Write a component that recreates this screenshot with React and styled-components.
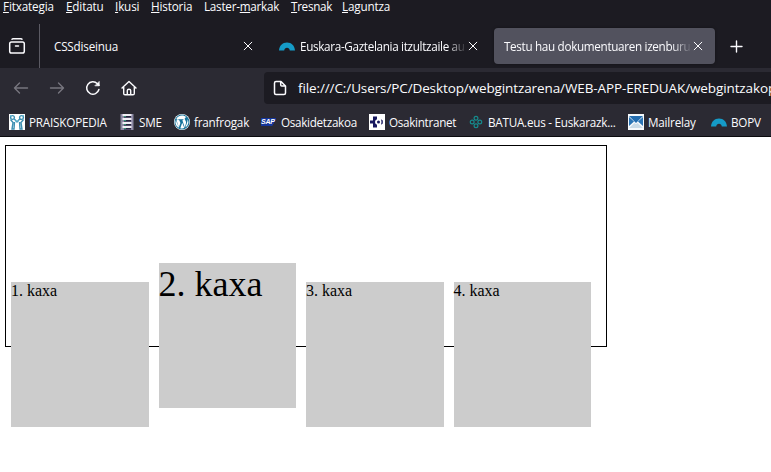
import React from 'react';
import styled, { createGlobalStyle } from 'styled-components';

const GlobalStyle = createGlobalStyle`
  * { box-sizing: border-box; }
  body { margin: 0; background: #fff; overflow: hidden; }
  svg { display: block; flex: none; }
`;

const Browser = styled.div`
  width: 771px;
  height: 472px;
  overflow: hidden;
  display: flex;
  flex-direction: column;
  background: #fff;
  color: #fbfbfe;
  font: 12px/16px "Open Sans", "Noto Sans", sans-serif;
`;

const MenuBar = styled.nav`
  flex: none;
  height: 24px;
  display: flex;
  gap: 12px;
  padding-left: 3px;
  background: #1c1b22;
`;

const Label = styled.span`
  flex: none;
  display: block;
  width: ${(p) => p.$w}px;
  height: 16px;
  font-size: 11.7px;
  letter-spacing: ${(p) => p.$ls || 0}px;
  white-space: nowrap;
`;

const MenuLabel = styled(Label)`
  margin-top: -2px;
  u { text-decoration-thickness: 1px; text-underline-offset: 1px; }
`;

const TabStrip = styled.div`
  flex: none;
  height: 44px;
  display: flex;
  background: #1c1b22;
`;

const RecentButton = styled.div`
  width: 40px;
  border-right: 1px solid #5b5a63;
  padding: 13px 0 0 8px;
`;

const Tab = styled.div`
  display: flex;
  align-items: center;
  width: ${(p) => p.$w}px;
  height: 36px;
  margin: 4px 0 0 ${(p) => p.$gap}px;
  padding-left: 10px;
  border-radius: 4px;
  background: ${(p) => (p.$active ? '#52525e' : 'transparent')};
  box-shadow: ${(p) => (p.$active ? '0 0 3px rgba(0, 0, 0, .35)' : 'none')};
`;

const TabTitle = styled(Label)`
  overflow: hidden;
  margin-left: ${(p) => (p.$icon ? 5 : 0)}px;
  mask-image: ${(p) => (p.$fade ? 'linear-gradient(to left, transparent, #000 20px)' : 'none')};
`;

const TabClose = styled.div`
  margin-left: ${(p) => p.$gap || 0}px;
`;

const NewTab = styled.div`
  margin: 16px 0 0 15px;
`;

const Toolbar = styled.div`
  flex: none;
  height: 40px;
  display: flex;
  align-items: center;
  gap: 20px;
  padding-left: 13px;
  background: #2b2a33;
`;

const AddressBar = styled.div`
  flex: none;
  display: flex;
  align-items: center;
  gap: 10px;
  width: 540px;
  height: 32px;
  margin-left: 107px;
  padding: 0 0 1px 8px;
  border-radius: 4px;
  background: #1c1b22;
`;

const Address = styled.span`
  font-size: 13.5px;
  line-height: 20px;
  letter-spacing: ${(p) => p.$ls}px;
  white-space: nowrap;
`;

const Bookmarks = styled.div`
  flex: none;
  height: 29px;
  display: flex;
  gap: 12px;
  padding: 6px 0 0 9px;
  background: #2b2a33;
  border-bottom: 1px solid #0b0b0e;
`;

const Bookmark = styled.div`
  flex: none;
  display: flex;
  gap: 4px;
`;

const Page = styled.main`
  padding: 8px 0 0 5px;
  color: #000;
  font: 16px "Liberation Serif", "Times New Roman", serif;
`;

const Frame = styled.section`
  width: 602px;
  height: 202px;
  display: flex;
  align-items: flex-start;
  gap: 10px;
  padding: 0 5px;
  border: 1px solid #000;
`;

const Box = styled.div`
  flex: none;
  width: 137.5px;
  height: 145px;
  margin-top: ${(p) => (p.$large ? 117 : 136)}px;
  background: #ccc;
  font-size: ${(p) => (p.$large ? 36 : 16)}px;
  line-height: ${(p) => (p.$large ? 42 : 18)}px;
`;

const Stroke = ({ size = 16, color = '#fbfbfe', width = 1.3, children }) => (
  <svg width={size} height={size} viewBox={`0 0 ${size} ${size}`} fill="none" stroke={color}
    strokeWidth={width} strokeLinecap="round" strokeLinejoin="round">{children}</svg>
);

const CloseIcon = () => (
  <Stroke size={10} width={1}><path d="M1.200 1.200l7.600 7.600M8.800 1.200L1.200 8.800" /></Stroke>
);

const ArcIcon = () => (
  <svg width="16" height="16" viewBox="0 0 16 16">
    <path d="M0 12.500C.3 7.500 3.500 4.500 8 4.500s7.700 3 8 8h-5.200C10.500 10.500 9.600 9.700 8 9.700s-2.500.8-2.800 2.800z" fill="#159bc7" />
  </svg>
);

const PraisIcon = () => (
  <svg width="16" height="16" viewBox="0 0 16 16">
    <path fill="#fff" d="M0 0h16v16H0z" />
    <g fill="none" stroke="#3c8fb2" strokeWidth="1.400">
      <circle cx="3.500" cy="3.500" r="1.900" /><circle cx="12.500" cy="3.500" r="1.900" />
      <path d="M1.500 5.500l2.500 3-1 6.500h2l.5-7M14.500 5.500l-2.500 3 1 6.500h-2l-.5-7M5.300 5L8 8l2.700-3" />
    </g>
    <path d="M1 1l2 2M15 1l-2 2M6 7h4" stroke="#69bfd9" />
  </svg>
);

const ServerIcon = () => (
  <svg width="16" height="16" viewBox="0 0 16 16">
    <path fill="#8b88a3" d="M1.500 0h13v16h-13z" />
    {[1, 5, 9, 13].map((y) => (
      <g key={y}>
        <path fill="#f0eff5" d={`M3.500 ${y - 1}h9v2h-9z`} />
        <path fill="#27233f" d={`M5 ${y + 1}h7v1.600H5z`} />
        <path fill="#2f9270" d={`M5 ${y + 1}h2v1H5z`} />
      </g>
    ))}
  </svg>
);

const WordPressIcon = () => (
  <svg width="16" height="16" viewBox="0 0 24 24">
    <circle cx="12" cy="12" r="12" fill="#fff" />
    <path fill="#16739b" d="M12 .8a11.200 11.200 0 1 0 0 22.400A11.200 11.200 0 0 0 12 .8zm0 1.500c2.500 0 4.800 1 6.500 2.500-1.600 0-2.400 1.200-2.400 2.500 0 2 2 3 2 5.500 0 1.200-.5 2.500-1 4.200l-1 3.200-3.500-11 1.500-.2V7.700H6.500V9l1.500.2 1.600 4.400-2.300 6.300-3.600-10.700L5 9V7.700H3.300A9.700 9.700 0 0 1 12 2.300zM2.700 9.500l4.800 11.200A9.700 9.700 0 0 1 2.700 9.500zm9.600 3.500l3.200 8a9.700 9.700 0 0 1-6 .3zm8.200-5.300a9.700 9.700 0 0 1-3.500 12.600c2-5.600 3.500-9 3.500-12.600z" />
  </svg>
);

const SapLogo = styled.span`
  width: 16px;
  height: 8px;
  margin-top: 4px;
  background: linear-gradient(118deg, #15369a 76%, transparent 77%);
  color: #fff;
  font: italic bold 7px/8px "Liberation Sans", sans-serif;
  letter-spacing: -.2px;
`;

const ClinicIcon = () => (
  <svg width="16" height="16" viewBox="0 0 16 16">
    <path fill="#fff" d="M0 0h16v16H0z" />
    <path fill="#17175e" d="M4 2.500h4v2.700Q6 6 6 8t2 2.800v2.700H4v-4H1v-3h3zM12 5.300l1.800 1.200v3L12 10.700q1-2.700 0-5.400z" />
    <circle cx="9.500" cy="8" r="1.500" fill="#17175e" />
  </svg>
);

const BatuaIcon = () => (
  <Stroke color="#168b8d" width={1.2}>
    <circle cx="8" cy="4.200" r="1.900" /><circle cx="8" cy="11.800" r="1.900" />
    <circle cx="4.200" cy="8" r="1.900" /><circle cx="11.800" cy="8" r="1.900" />
  </Stroke>
);

const MailIcon = () => (
  <svg width="16" height="16" viewBox="0 0 16 16">
    <path fill="#f5f9fc" d="M0 0h16v16H0z" />
    <path fill="#236db0" d="M1 2h14L8 9z" />
    <path fill="#2a74b5" d="M1 3v9l5-4.500zM15 3v9l-5-4.500z" />
    <path fill="#c9dbe8" d="M1 14l5.500-5L8 10.200 9.500 9l5.500 5z" />
  </svg>
);

const menus = [
  ['', 'F', 'itxategia', 51, -0.15], ['', 'E', 'ditatu', 37, -0.15], ['', 'I', 'kusi', 24, -0.15],
  ['', 'H', 'istoria', 41, -0.15], ['Laster-', 'm', 'arkak', 75, -0.25],
  ['', 'T', 'resnak', 39, -0.3], ['', 'L', 'aguntza', 48, -0.15],
];

const bookmarks = [
  ['PRAISKOPEDIA', 78, -0.2, <PraisIcon />], ['SME', 23, -0.15, <ServerIcon />],
  ['franfrogak', 55, -0.2, <WordPressIcon />], ['Osakidetzakoa', 76, -0.3, <SapLogo>SAP</SapLogo>],
  ['Osakintranet', 67, -0.3, <ClinicIcon />], ['BATUA.eus - Euskarazk...', 128, -0.24, <BatuaIcon />],
  ['Mailrelay', 51, -0.2, <MailIcon />], ['BOPV', 31, -0.25, <ArcIcon />],
];

export default function App() {
  return (
    <>
      <GlobalStyle />
      <Browser>
        <MenuBar>
          {menus.map(([before, key, after, w, ls]) => (
            <MenuLabel key={key} $w={w} $ls={ls}>{before}<u>{key}</u>{after}</MenuLabel>
          ))}
        </MenuBar>
        <TabStrip>
          <RecentButton>
            <Stroke size={18} width={1.5}>
              <path d="M4 2.200C4.400 1.800 4.700 1.700 5 1.700h8c.4 0 .7.1 1 .5" />
              <rect x="1.700" y="5" width="14.600" height="11" rx="1.800" /><path d="M7.500 9h3" />
            </Stroke>
          </RecentButton>
          <Tab $w={221} $gap={4}>
            <TabTitle $w={189} $ls={-0.2}>CSSdiseinua</TabTitle>
            <TabClose><CloseIcon /></TabClose>
          </Tab>
          <Tab $w={221} $gap={4}>
            <ArcIcon />
            <TabTitle $w={167} $ls={-0.32} $icon $fade>Euskara-Gaztelania itzultzaile au</TabTitle>
            <TabClose $gap={1}><CloseIcon /></TabClose>
          </Tab>
          <Tab $w={221} $gap={4} $active>
            <TabTitle $w={188} $ls={-0.32} $fade>Testu hau dokumentuaren izenburu</TabTitle>
            <TabClose $gap={1}><CloseIcon /></TabClose>
          </Tab>
          <NewTab>
            <Stroke size={13} width={1.4}><path d="M6.500 1v11M1 6.500h11" /></Stroke>
          </NewTab>
        </TabStrip>
        <Toolbar>
          <Stroke color="#77767f" width={1.4}><path d="M14.500 8H1.500M6.500 3l-5 5 5 5" /></Stroke>
          <Stroke color="#77767f" width={1.4}><path d="M1.500 8h13M9.500 3l5 5-5 5" /></Stroke>
          <Stroke width={1.5}>
            <path d="M13.900 9.500a6.200 6.200 0 1 1-1.500-5.800L14 5.200" /><path d="M14.200 1.800v4h-4z" fill="#fbfbfe" strokeWidth=".7" />
          </Stroke>
          <Stroke width={1.4}>
            <path d="M1 8l7-6.600L15 8M2.700 7v6.500q0 1.300 1.300 1.300h8q1.300 0 1.300-1.300V7M6.300 14.500v-4q0-1.200 1.700-1.200t1.700 1.200v4" />
          </Stroke>
          <AddressBar>
            <Stroke width={1.5}>
              <path d="M4 1.500h5l4.500 4.500v7q0 1.500-1.500 1.500H4Q2.500 14.500 2.500 13V3Q2.500 1.500 4 1.500zM8.700 1.500V5q0 1 1 1h3.800" />
            </Stroke>
            <Address $ls={-0.11}>file:///C:/Users/PC/Desktop/webgintzarena/WEB-APP-EREDUAK/webgintzakop</Address>
          </AddressBar>
        </Toolbar>
        <Bookmarks>
          {bookmarks.map(([name, w, ls, icon]) => (
            <Bookmark key={name}>{icon}<Label $w={w} $ls={ls}>{name}</Label></Bookmark>
          ))}
        </Bookmarks>
        <Page>
          <Frame>
            <Box>1. kaxa</Box>
            <Box $large>2. kaxa</Box>
            <Box>3. kaxa</Box>
            <Box>4. kaxa</Box>
          </Frame>
        </Page>
      </Browser>
    </>
  );
}
